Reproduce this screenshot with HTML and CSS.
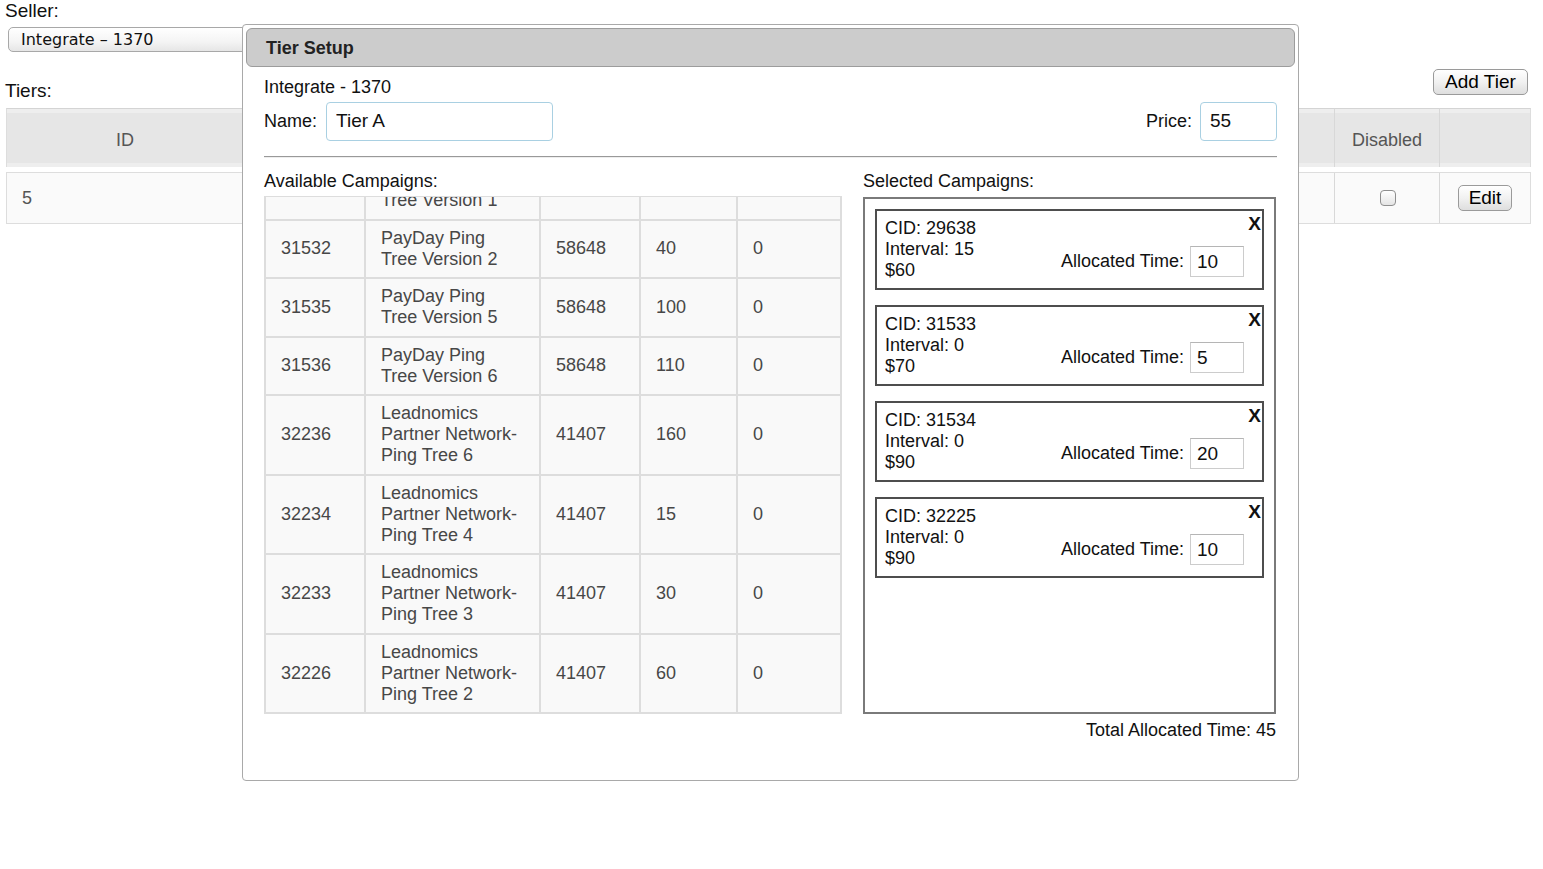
FILE: index.html
```html
<!DOCTYPE html>
<html>
<head>
<meta charset="utf-8">
<title>Tier Setup</title>
<link rel="stylesheet" href="styles.css">
</head>
<body>
<div class="page">
  <div class="seller-label">Seller:</div>
  <div class="select">Integrate – 1370</div>
  <div class="tiers-row">
    <div class="tiers-label">Tiers:</div>
    <button class="btn add-tier">Add Tier</button>
  </div>
  <div class="tiers-table">
    <div class="grid thead">
      <div class="th c-id">ID</div>
      <div class="th c-mid"></div>
      <div class="th c-dis">Disabled</div>
      <div class="th c-edit"></div>
    </div>
    <div class="grid trow">
      <div class="td c-id">5</div>
      <div class="td c-mid"></div>
      <div class="td c-dis center"><span class="checkbox"></span></div>
      <div class="td c-edit center"><button class="btn edit">Edit</button></div>
    </div>
  </div>
</div>

<div class="dialog">
  <div class="dialog-title">Tier Setup</div>
  <div class="dialog-body">
    <div class="seller-name">Integrate - 1370</div>
    <div class="form-row">
      <label class="field"><span>Name:</span><input class="input name-input" type="text" value="Tier A"></label>
      <label class="field"><span>Price:</span><input class="input price-input" type="text" value="55"></label>
    </div>
    <div class="divider"></div>
    <div class="columns">
      <div class="col-available">
        <div class="section-label">Available Campaigns:</div>
        <div class="avail-box">
          <table class="avail-table">
            <colgroup>
              <col class="w1"><col class="w2"><col class="w3"><col class="w4"><col class="w5">
            </colgroup>
            <tbody>
              <tr><td></td><td>PayDay Ping Tree Version 1</td><td></td><td></td><td></td></tr>
              <tr><td>31532</td><td>PayDay Ping Tree Version 2</td><td>58648</td><td>40</td><td>0</td></tr>
              <tr><td>31535</td><td>PayDay Ping Tree Version 5</td><td>58648</td><td>100</td><td>0</td></tr>
              <tr><td>31536</td><td>PayDay Ping Tree Version 6</td><td>58648</td><td>110</td><td>0</td></tr>
              <tr><td>32236</td><td>Leadnomics Partner Network-Ping Tree 6</td><td>41407</td><td>160</td><td>0</td></tr>
              <tr><td>32234</td><td>Leadnomics Partner Network-Ping Tree 4</td><td>41407</td><td>15</td><td>0</td></tr>
              <tr><td>32233</td><td>Leadnomics Partner Network-Ping Tree 3</td><td>41407</td><td>30</td><td>0</td></tr>
              <tr><td>32226</td><td>Leadnomics Partner Network-Ping Tree 2</td><td>41407</td><td>60</td><td>0</td></tr>
            </tbody>
          </table>
        </div>
      </div>
      <div class="col-selected">
        <div class="section-label">Selected Campaigns:</div>
        <div class="selected-box">
          <div class="card">
            <div class="info"><div>CID: 29638</div><div>Interval: 15</div><div>$60</div></div>
            <div class="alloc"><span>Allocated Time:</span><input class="alloc-input" type="text" value="10"></div>
            <span class="remove">X</span>
          </div>
          <div class="card">
            <div class="info"><div>CID: 31533</div><div>Interval: 0</div><div>$70</div></div>
            <div class="alloc"><span>Allocated Time:</span><input class="alloc-input" type="text" value="5"></div>
            <span class="remove">X</span>
          </div>
          <div class="card">
            <div class="info"><div>CID: 31534</div><div>Interval: 0</div><div>$90</div></div>
            <div class="alloc"><span>Allocated Time:</span><input class="alloc-input" type="text" value="20"></div>
            <span class="remove">X</span>
          </div>
          <div class="card">
            <div class="info"><div>CID: 32225</div><div>Interval: 0</div><div>$90</div></div>
            <div class="alloc"><span>Allocated Time:</span><input class="alloc-input" type="text" value="10"></div>
            <span class="remove">X</span>
          </div>
        </div>
        <div class="total">Total Allocated Time: 45</div>
      </div>
    </div>
  </div>
</div>
</body>
</html>
```

FILE: styles.css
```css
* { box-sizing: border-box; }

html, body {
  margin: 0;
  padding: 0;
  background: #fff;
  font-family: "Liberation Sans", Arial, sans-serif;
  color: #111;
}

.page {
  padding: 0 12px 0 6px;
}

.seller-label {
  font-size: 19px;
  line-height: 22px;
  margin-left: -1px;
}

.select {
  margin-top: 5px;
  margin-left: 2px;
  width: 300px;
  height: 25px;
  border: 1px solid #a8a8a8;
  border-radius: 5px;
  background: linear-gradient(#ffffff, #f4f4f4 60%, #e6e6e6);
  font-family: "DejaVu Sans", sans-serif;
  font-size: 16px;
  line-height: 23px;
  padding-left: 12px;
  color: #111;
}

.tiers-row {
  margin-top: 17px;
  height: 33px;
  display: flex;
  justify-content: space-between;
}

.tiers-label {
  align-self: flex-end;
  font-size: 19px;
  line-height: 22px;
  margin-left: -1px;
}

.btn {
  font-family: "Liberation Sans", Arial, sans-serif;
  font-size: 19px;
  color: #000;
  border: 1px solid #9a9a9a;
  border-radius: 5px;
  background: linear-gradient(#ffffff, #f1f1f1 50%, #dedede);
  padding: 0;
  height: 26px;
  line-height: 24px;
}

.add-tier {
  align-self: flex-start;
  width: 95px;
  margin-right: 3px;
}

.tiers-table {
  margin-top: 6px;
}

.grid {
  display: grid;
  grid-template-columns: 237px 1fr 105px 92px;
}

.th {
  height: 59px;
  background: #e6e6e6;
  border-top: 1px solid #d4d4d4;
  box-shadow: inset 0 4px 0 #eeeeee, inset 0 -4px 0 #eeeeee;
  color: #555;
  font-size: 18px;
  display: flex;
  align-items: center;
  justify-content: center;
  padding-top: 5px;
}

.c-id { border-left: 1px solid #dddddd; }
.c-dis { border-left: 1px solid #d8d8d8; }
.c-edit { border-left: 1px solid #d8d8d8; border-right: 1px solid #dddddd; }

.trow {
  margin-top: 5px;
  border-top: 1px solid #dddddd;
  border-bottom: 1px solid #dddddd;
}

.td {
  height: 50px;
  background: #fafafa;
  color: #555;
  font-size: 18px;
  display: flex;
  align-items: center;
  padding-left: 15px;
}

.td.center {
  justify-content: center;
  padding-left: 0;
}

.checkbox {
  display: block;
  width: 16px;
  height: 16px;
  border: 1px solid #8e8e8e;
  border-radius: 4px;
  background: linear-gradient(#ffffff, #e4e4e4);
  margin-left: 2px;
}

.edit {
  width: 54px;
}

/* Dialog overlay */
.dialog {
  position: absolute;
  left: 242px;
  top: 24px;
  width: 1057px;
  height: 757px;
  background: #fff;
  border: 1px solid #a9a9a9;
  border-radius: 4px;
  padding: 3px;
}

.dialog-title {
  height: 39px;
  background: #cccccc;
  border: 1px solid #9c9c9c;
  border-radius: 6px;
  font-weight: bold;
  font-size: 18px;
  line-height: 38px;
  padding-left: 19px;
  color: #222;
}

.dialog-body {
  padding: 0 18px;
}

.seller-name {
  margin-top: 10px;
  font-size: 18px;
  line-height: 21px;
}

.form-row {
  margin-top: 3px;
  height: 40px;
  display: flex;
  justify-content: space-between;
  align-items: center;
}

.field {
  display: flex;
  align-items: center;
  gap: 8px;
  font-size: 18px;
}

.field:first-child { gap: 9px; }

.input {
  height: 39px;
  border: 1px solid #a9d0e2;
  border-radius: 4px;
  padding: 0 9px;
  font-family: "Liberation Sans", Arial, sans-serif;
  font-size: 19px;
  color: #111;
  background: #fff;
  outline: none;
}

.name-input { width: 227px; }
.price-input { width: 77px; }

.divider {
  margin-top: 15px;
  border-top: 1px solid #999999;
  border-bottom: 1px solid #eeeeee;
}

.columns {
  margin-top: 13px;
  display: flex;
  gap: 21px;
}

.col-available { width: 578px; }
.col-selected { width: 413px; }

.section-label {
  font-size: 18px;
  line-height: 21px;
}

.avail-box {
  margin-top: 4px;
  height: 518px;
  border: 1px solid #dddddd;
  background: #dddddd;
  overflow: hidden;
}

.avail-table {
  margin-top: -36px;
  width: 576px;
  table-layout: fixed;
  border-collapse: separate;
  border-spacing: 0;
}

.w1 { width: 100px; }
.w2 { width: 175px; }
.w3 { width: 100px; }
.w4 { width: 97px; }
.w5 { width: 104px; }

.avail-table td {
  border: 1px solid #dddddd;
  background: #f9f9f9;
  padding: 7px 15px 7.5px;
  font-size: 18px;
  line-height: 21px;
  color: #474747;
  vertical-align: middle;
}

.selected-box {
  margin-top: 5px;
  height: 517px;
  border: 2px solid #7a7a7a;
  padding: 10px;
}

.card {
  position: relative;
  height: 81px;
  border: 2px solid #4e4e4e;
  padding: 7px 8px;
  margin-bottom: 15px;
  display: flex;
  justify-content: space-between;
  font-size: 18px;
  line-height: 21px;
}

.alloc {
  align-self: flex-end;
  display: flex;
  align-items: center;
  gap: 6px;
  margin-bottom: 4px;
  margin-right: 10px;
}

.alloc-input {
  width: 54px;
  height: 31px;
  border: 1px solid #cccccc;
  border-top-color: #b5b5b5;
  padding: 0 6px;
  font-family: "Liberation Sans", Arial, sans-serif;
  font-size: 19px;
  color: #111;
  background: #fff;
  outline: none;
}

.remove {
  position: absolute;
  top: 3px;
  right: 1px;
  font-weight: bold;
  font-size: 19px;
  line-height: 20px;
}

.total {
  margin-top: 6px;
  text-align: right;
  font-size: 18px;
  line-height: 21px;
}
```
